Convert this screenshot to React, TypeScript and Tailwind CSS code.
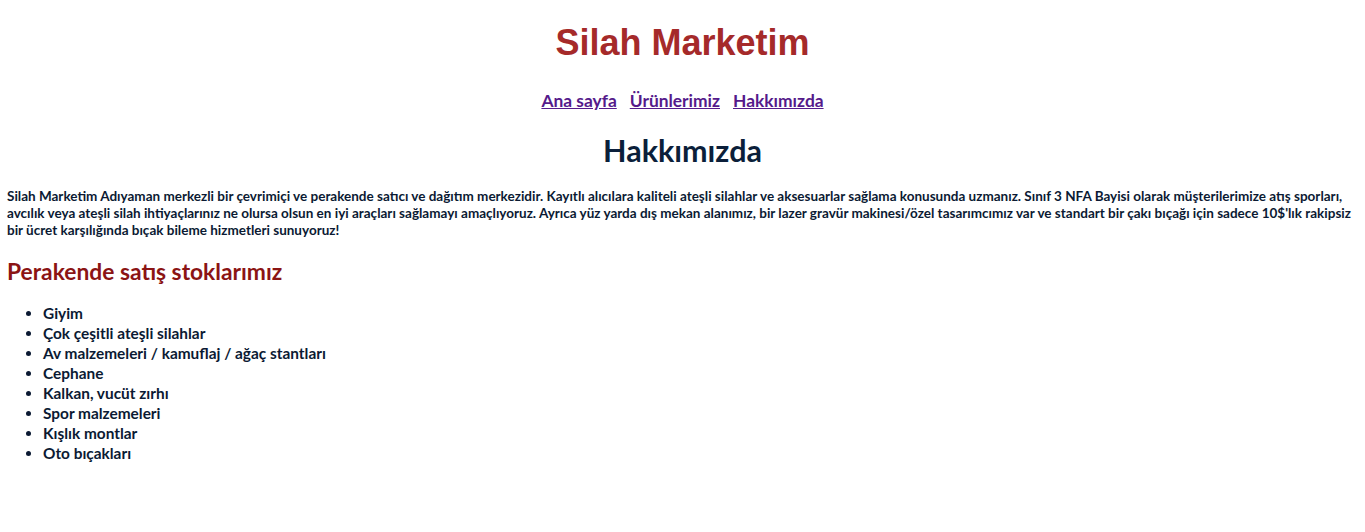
export default function App() {
  const items = [
    'Giyim',
    'Çok çeşitli ateşli silahlar',
    'Av malzemeleri / kamuflaj / ağaç stantları',
    'Cephane',
    'Kalkan, vucüt zırhı',
    'Spor malzemeleri',
    'Kışlık montlar',
    'Oto bıçakları',
  ]

  return (
    <div className="min-h-screen bg-white px-[7px] font-['Lato',sans-serif] font-bold text-[#0b1a33]">
      {/* Header */}
      <h1 className="pt-[22px] text-center font-['Liberation_Sans',Arial,sans-serif] text-[36px] leading-[42px] text-[#a52a2a]">
        Silah Marketim
      </h1>

      <nav className="mt-[27px] flex justify-center gap-[13px] text-[17.4px] leading-[20px]">
        <a href="#" className="text-[#551a8b] underline">Ana sayfa</a>
        <a href="#" className="text-[#551a8b] underline">Ürünlerimiz</a>
        <a href="#" className="text-[#551a8b] underline">Hakkımızda</a>
      </nav>

      <h2 className="mt-[21px] text-center text-[30.5px] leading-[36px] text-[#0b1f3a]">Hakkımızda</h2>

      <p className="mt-[20px] text-[13.5px] leading-[17px]">
        Silah Marketim Adıyaman merkezli bir çevrimiçi ve perakende satıcı ve dağıtım merkezidir. Kayıtlı alıcılara kaliteli ateşli silahlar ve aksesuarlar sağlama konusunda uzmanız. Sınıf 3 NFA Bayisi olarak müşterilerimize atış sporları, avcılık veya ateşli silah ihtiyaçlarınız ne olursa olsun en iyi araçları sağlamayı amaçlıyoruz. Ayrıca yüz yarda dış mekan alanımız, bir lazer gravür makinesi/özel tasarımcımız var ve standart bir çakı bıçağı için sadece 10$'lık rakipsiz bir ücret karşılığında bıçak bileme hizmetleri sunuyoruz!
      </p>

      <h3 className="mt-[18px] text-[22.8px] leading-[28px] text-[#8b1414]">Perakende satış stoklarımız</h3>

      <ul className="mt-[18px] list-disc pl-[36px] text-[15.4px] leading-[20px]">
        {items.map((item) => (
          <li key={item}>{item}</li>
        ))}
      </ul>
    </div>
  )
}
